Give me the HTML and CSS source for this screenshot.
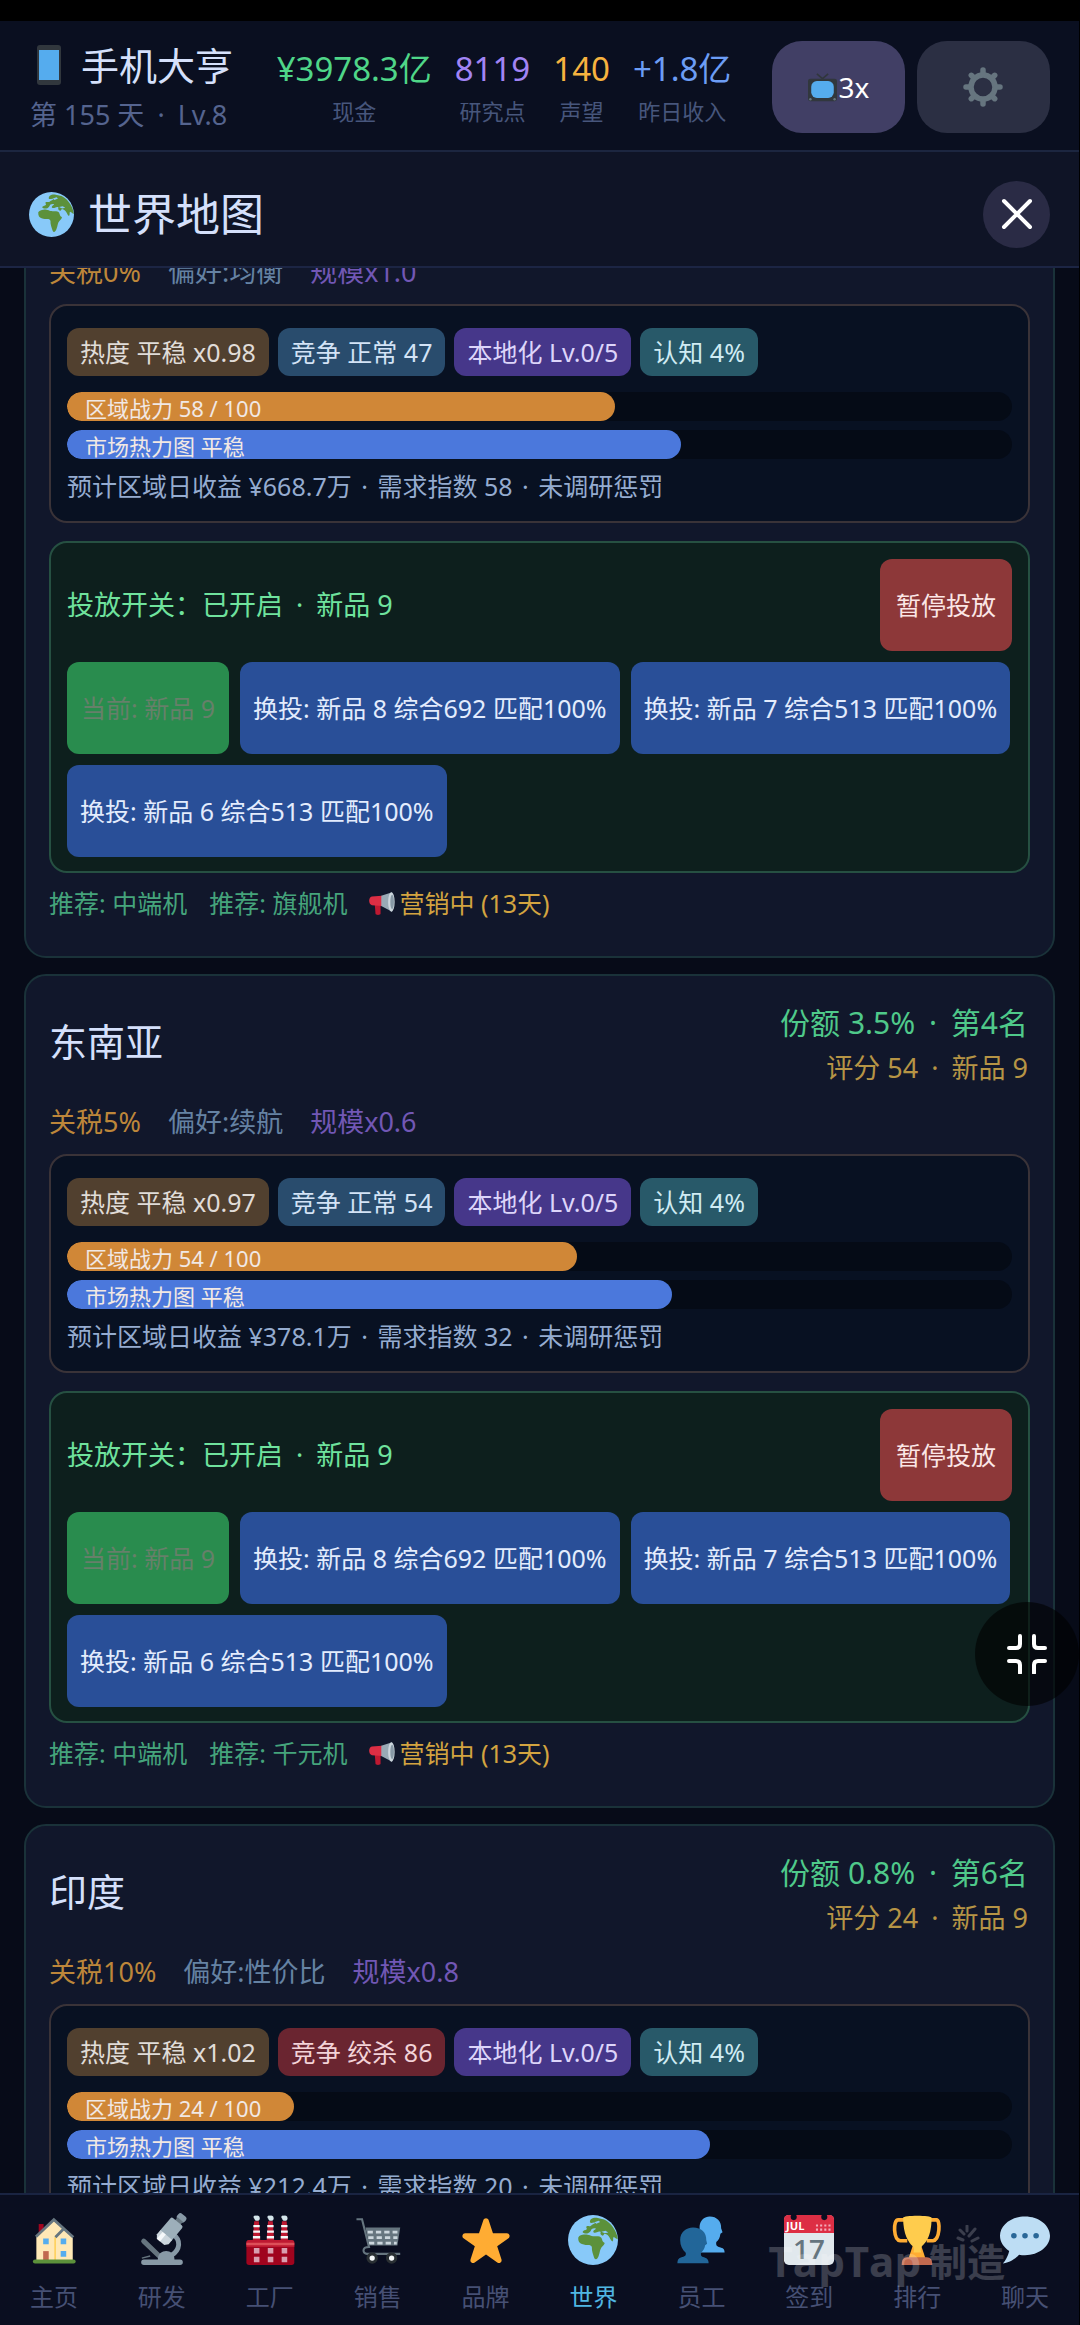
FILE: index.html
```html
<!DOCTYPE html>
<html lang="zh-CN">
<head>
<meta charset="utf-8">
<meta name="viewport" content="width=device-width, initial-scale=1">
<title>手机大亨 · 世界地图</title>
<link rel="stylesheet" href="styles.css">
</head>
<body>
<svg class="sprite" aria-hidden="true">
  <symbol id="i-globe" viewBox="0 0 36 36">
    <circle cx="18" cy="18" r="18" fill="#88c9f9"/>
    <path fill="#5c913b" d="M7.4 16.2c.8-1.5 2.600-2 4.200-2.100 1.700-.1 2.600.1 4.200.5 1.100.9 2.900.7 4.600.700 1.700 0 3.200.3 3.700 1.200.5.900.5 1.700 1 2.600.4.700 1.300.6 1.300 1.300-.4 1.500-2.200 2.500-2.900 4-.5 1.200-.7 2.900-1.200 4.200-.3 1.300-1 3.100-2.100 3.300-1.200.1-1.500-1.700-1.900-2.800-.5-1.200-.8-2.500-1-3.700-.2-1.300.2-2.300-.5-3.100-1.100-.9-2.600-.6-4.100-.7-1.700-.2-3.800-.8-4.700-2.100-.5-1-.7-2-.6-3.300z"/>
    <path fill="#5c913b" d="M16.500 3.100c1.400-1 3.500-1.300 4.900-.9l4.600 1c1.800.7 4 2.500 5.600 4.600 2 2.500 4 6.200 4.200 9.700-1.200-.3-1.800-1.500-3-1.700-.7 1.200.2 2.200-.8 3.300-.7-.4-1.400-1.600-2-2.800-.8-1.400-2-2.600-3.600-2.800-1 .5-.3 1.200-1.500 1.400-1.200-.4-2-1.500-1.300-2.600-1-.8-1.900-.1-2.800.2-1.200.5-2.700.3-2.600-.6.2-1.100 1.300-1.200 1.900-2-1-.6-2.200-.1-3.200.3-.5 1.200-1 2.100-2.200 2.700-1.500.7-3.600.4-4.200-.7.3-1.300 2.100-1 3-1.900.4-.8-.8-1.400-.2-2.100.9-.6 2.300.3 3.200-.5.800-.9 2.200-.9 3-1.900-.8-.9-2.600.4-3.600-.4-.4-.9.200-1.800.6-2.300z"/>
    <path fill="#88c9f9" d="M19 5.200l3-1 1.200.9-2.800 1.200zM24 12l3-.7 2 1.300-2.500.5z"/>
  </symbol>
  <symbol id="i-bullhorn" viewBox="0 0 36 36">
    <path fill="#be1931" d="M8 20h8v13c0 2-7 2-7 0z"/>
    <path fill="#dd2e44" d="M4 9l14-1v14L4 21c-5-1-5-11 0-12z"/>
    <path fill="#99aab5" d="M17 8L32 3v27L17 22z"/>
    <ellipse cx="31" cy="16.500" rx="4.500" ry="13.500" fill="#ccd6dd"/>
    <ellipse cx="32" cy="16.500" rx="2.500" ry="10" fill="#8899a6"/>
  </symbol>
</svg>

<div class="app">
  <header class="topbar">
    <div class="brand">
      <h1 class="brand-name">
        <svg class="phone" viewBox="0 0 24 40" aria-hidden="true"><rect width="24" height="40" rx="3" fill="#31373d"/><rect x="2" y="5" width="20" height="30" fill="#55acee"/></svg>
        手机大亨
      </h1>
      <p class="brand-sub">第 155 天 <span class="dot">·</span> Lv.8</p>
    </div>
    <dl class="stats">
      <div class="stat"><dd class="green">¥3978.3亿</dd><dt>现金</dt></div>
      <div class="stat"><dd class="violet">8119</dd><dt>研究点</dt></div>
      <div class="stat"><dd class="amber">140</dd><dt>声望</dt></div>
      <div class="stat"><dd class="blue">+1.8亿</dd><dt>昨日收入</dt></div>
    </dl>
    <div class="actions">
      <button class="action action-speed" type="button">
        <svg class="tv" viewBox="0 0 36 36" aria-hidden="true"><path d="M11 1l7 6 7-6" fill="none" stroke="#31373d" stroke-width="2"/><rect y="7" width="36" height="28" rx="3" fill="#31373d"/><rect x="4" y="10" width="28" height="21" rx="7" fill="#55acee"/><circle cx="3" cy="32.500" r="1.500" fill="#66757f"/><circle cx="33" cy="32.500" r="1.500" fill="#66757f"/></svg>3x
      </button>
      <button class="action" type="button" aria-label="设置">
        <svg class="gear" viewBox="0 0 40 40" aria-hidden="true"><g fill="none" stroke="#66757f" stroke-width="5.500"><circle cx="20" cy="20" r="12"/><path stroke-linecap="round" d="M20 7V3M20 33v4M7 20H3M33 20h4M10.800 10.800L8.300 8.300M29.200 10.800l2.500-2.500M10.800 29.200l-2.500 2.500M29.200 29.200l2.500 2.500"/></g></svg>
      </button>
    </div>
  </header>

  <div class="titlebar">
    <h2 class="title"><svg class="title-icon" aria-hidden="true"><use href="#i-globe"/></svg>世界地图</h2>
    <button class="close" type="button" aria-label="关闭">
      <svg viewBox="0 0 32 32" aria-hidden="true"><path d="M3 3l26 26M29 3L3 29" stroke="#fff" stroke-width="4" stroke-linecap="round"/></svg>
    </button>
  </div>

  <main class="regions" id="regions">
    <article class="card">
      <ul class="meta"><li class="tax">关税0%</li><li class="pref">偏好:均衡</li><li class="scale">规模x1.0</li></ul>
      <section class="market">
        <ul class="tags"><li class="tag heat">热度 平稳 x0.98</li><li class="tag rival">竞争 正常 47</li><li class="tag local">本地化 Lv.0/5</li><li class="tag aware">认知 4%</li></ul>
        <div class="bar"><div class="fill power" style="width:58%"></div><span class="bar-label">区域战力 58 / 100</span></div>
        <div class="bar"><div class="fill demand" style="width:65%"></div><span class="bar-label">市场热力图 平稳</span></div>
        <p class="forecast">预计区域日收益 ¥668.7万 <span class="dot">·</span> 需求指数 58 <span class="dot">·</span> 未调研惩罚</p>
      </section>
      <section class="launch">
        <div class="launch-head"><p>投放开关：已开启 <span class="dot">·</span> 新品 9</p><button class="btn stop" type="button">暂停投放</button></div>
        <div class="choices">
          <button class="btn current" type="button" disabled>当前: 新品 9</button>
          <button class="btn" type="button">换投: 新品 8 综合692 匹配100%</button>
          <button class="btn" type="button">换投: 新品 7 综合513 匹配100%</button>
          <button class="btn" type="button">换投: 新品 6 综合513 匹配100%</button>
        </div>
      </section>
      <ul class="hints"><li>推荐: 中端机</li><li>推荐: 旗舰机</li><li class="promo"><svg aria-hidden="true"><use href="#i-bullhorn"/></svg>营销中 (13天)</li></ul>
    </article>

    <article class="card">
      <div class="card-head">
        <h3>东南亚</h3>
        <div class="rank"><p class="share">份额 3.5% <span class="dot">·</span> 第4名</p><p class="score">评分 54 <span class="dot">·</span> 新品 9</p></div>
      </div>
      <ul class="meta"><li class="tax">关税5%</li><li class="pref">偏好:续航</li><li class="scale">规模x0.6</li></ul>
      <section class="market">
        <ul class="tags"><li class="tag heat">热度 平稳 x0.97</li><li class="tag rival">竞争 正常 54</li><li class="tag local">本地化 Lv.0/5</li><li class="tag aware">认知 4%</li></ul>
        <div class="bar"><div class="fill power" style="width:54%"></div><span class="bar-label">区域战力 54 / 100</span></div>
        <div class="bar"><div class="fill demand" style="width:64%"></div><span class="bar-label">市场热力图 平稳</span></div>
        <p class="forecast">预计区域日收益 ¥378.1万 <span class="dot">·</span> 需求指数 32 <span class="dot">·</span> 未调研惩罚</p>
      </section>
      <section class="launch">
        <div class="launch-head"><p>投放开关：已开启 <span class="dot">·</span> 新品 9</p><button class="btn stop" type="button">暂停投放</button></div>
        <div class="choices">
          <button class="btn current" type="button" disabled>当前: 新品 9</button>
          <button class="btn" type="button">换投: 新品 8 综合692 匹配100%</button>
          <button class="btn" type="button">换投: 新品 7 综合513 匹配100%</button>
          <button class="btn" type="button">换投: 新品 6 综合513 匹配100%</button>
        </div>
      </section>
      <ul class="hints"><li>推荐: 中端机</li><li>推荐: 千元机</li><li class="promo"><svg aria-hidden="true"><use href="#i-bullhorn"/></svg>营销中 (13天)</li></ul>
    </article>

    <article class="card">
      <div class="card-head">
        <h3>印度</h3>
        <div class="rank"><p class="share">份额 0.8% <span class="dot">·</span> 第6名</p><p class="score">评分 24 <span class="dot">·</span> 新品 9</p></div>
      </div>
      <ul class="meta"><li class="tax">关税10%</li><li class="pref">偏好:性价比</li><li class="scale">规模x0.8</li></ul>
      <section class="market">
        <ul class="tags"><li class="tag heat">热度 平稳 x1.02</li><li class="tag fierce">竞争 绞杀 86</li><li class="tag local">本地化 Lv.0/5</li><li class="tag aware">认知 4%</li></ul>
        <div class="bar"><div class="fill power" style="width:24%"></div><span class="bar-label">区域战力 24 / 100</span></div>
        <div class="bar"><div class="fill demand" style="width:68%"></div><span class="bar-label">市场热力图 平稳</span></div>
        <p class="forecast">预计区域日收益 ¥212.4万 <span class="dot">·</span> 需求指数 20 <span class="dot">·</span> 未调研惩罚</p>
      </section>
    </article>
  </main>

  <nav class="tabs">
    <a class="tab" href="#home"><svg viewBox="0 0 36 36" aria-hidden="true"><path fill="#a0041e" d="M7 6.500h3.500V13H7z"/><path fill="#ffe8b6" d="M5.300 15L17.800 4l13.700 12v17H5.300z"/><path fill="#ffcc4d" d="M18.300 16h1v17h-1z"/><path d="M5 15.600L17.900 3.400l14 12.600M19 16l5.500-5.500" fill="none" stroke="#66757f" stroke-width="2"/><path fill="#55acee" d="M10.200 17h4v4h-4zM22.800 17h4v4h-4zM22.800 26h4v4h-4z"/><path fill="#c1694f" d="M10.200 26h4v6.500h-4z"/><rect x="2.800" y="32" width="30.800" height="3" rx="1.500" fill="#5c913b"/></svg>主页</a>
    <a class="tab" href="#research"><svg viewBox="0 0 36 36" aria-hidden="true"><path d="M4.800 18.800l11 10.500" stroke="#66757f" stroke-width="3.600" stroke-linecap="round"/><path d="M26 14c6 4 5 11-1 15" fill="none" stroke="#8899a6" stroke-width="3.500"/><path fill="#8899a6" d="M15 32c0-8 12-8 12 0h4a2 2 0 010 4H5a2 2 0 010-4z"/><path d="M3.500 31l6-1.500" stroke="#66757f" stroke-width="1"/><g transform="rotate(40 21 13)"><rect x="19" y="-5" width="7" height="5" rx="2" fill="#8899a6"/><rect x="20" y="-1" width="5" height="4" fill="#66757f"/><rect x="16.500" y="1.500" width="11" height="14" rx="1.500" fill="#9dafba"/><path fill="#ccd6dd" d="M16.500 14h11v4l-2 2.500h-7l-2-2.500z"/><path fill="#f5f8fa" d="M18.500 14h3v6.500h-3z"/></g></svg>研发</a>
    <a class="tab" href="#factory"><svg viewBox="0 0 36 36" aria-hidden="true"><g id="stack"><path fill="#be1931" d="M6.600 4.500h3.400l1 14H5.600z"/><path stroke="#f5f8fa" stroke-width="1.700" d="M6 8h4.600M5.900 12h4.900M5.700 16h5.200"/><circle cx="8.700" cy="2.300" r="1.900" fill="#d5e5ea"/><circle cx="7.300" cy="1.500" r="1.200" fill="#d5e5ea"/></g><use href="#stack" x="10"/><use href="#stack" x="20"/><rect x="1" y="18" width="34.500" height="18" rx="2" fill="#a0041e"/><path fill="#be1931" d="M1 20a2 2 0 012-2h30.500a2 2 0 012 2v3H1z"/><path fill="#dd4f58" d="M1 20h34.500v1.800H1z"/><path fill="#d99eae" d="M6.400 23.800h4v4h-4zM16.400 23.800h4v4h-4zM26.400 23.800h4v4h-4zM6.400 30h4v4h-4zM16.400 30h4v4h-4zM26.400 30h4v4h-4z"/></svg>工厂</a>
    <a class="tab" href="#sales"><svg viewBox="0 0 36 36" aria-hidden="true"><path fill="#66757f" d="M9 9h25l-2 13H11.500z"/><path stroke="#ccd6dd" stroke-width="2" stroke-dasharray="3.800 2.200" d="M10.500 12.300H32M11 16.300h21M11.500 20.300h20"/><path d="M2.500 3h4l5 20C6 23 7 28 10 28h24" fill="none" stroke="#66757f" stroke-width="1.500"/><g fill="#f5f8fa" stroke="#292f33" stroke-width="2.200"><circle cx="13.800" cy="31" r="3"/><circle cx="27.800" cy="31" r="3"/></g></svg>销售</a>
    <a class="tab" href="#brand"><svg viewBox="0 0 36 36" aria-hidden="true"><path fill="#ffac33" d="M27.287 34.627c-.404 0-.806-.124-1.152-.371L18 28.422l-8.135 5.834c-.343.247-.747.371-1.148.371-.405 0-.81-.126-1.156-.38-.68-.498-.966-1.370-.71-2.173l3.095-9.577-8.127-5.802c-.682-.492-.973-1.360-.722-2.169.252-.803.990-1.356 1.832-1.371l10.019-.015 3.191-9.477c.27-.8 1.020-1.340 1.865-1.340.845 0 1.596.540 1.866 1.340l3.130 9.477 10.079.015c.844.015 1.583.568 1.833 1.371.25.809-.04 1.677-.722 2.169l-8.127 5.802 3.095 9.577c.257.803-.03 1.675-.71 2.173-.346.254-.752.380-1.157.380z"/></svg>品牌</a>
    <a class="tab active" href="#world" aria-current="page"><svg aria-hidden="true"><use href="#i-globe"/></svg>世界</a>
    <a class="tab" href="#staff"><svg viewBox="0 0 36 36" aria-hidden="true"><path fill="#55acee" d="M24.300 1c5 0 8.500 3.500 8.200 8.500l1 3-1.500 1c-.4 3-1.300 4.500-3 6-.5 3 1 3.500 3.500 4 1.800.4 2.500 1.500 2.500 3.500H17V8c.5-4.500 3.500-7 7.300-7z"/><path fill="#226699" d="M12.300 9c6 0 9.700 3.500 9.500 9.200l.6 2.500-1.400 1c-.3 2.500-1.500 4-3 5.500-.4 2.500.8 3 3 3.500 1.800.5 2.500 2 2.500 4H1c0-2.500.8-3.800 3-4.300 2-.5 3.500-.8 3-3.200C4.500 25 3 22 3 18c0-5.500 4-9 9.300-9z"/></svg>员工</a>
    <a class="tab" href="#checkin"><svg viewBox="0 0 36 36" aria-hidden="true"><rect width="36" height="36" rx="3.500" fill="#e1e8ed"/><path fill="#dd2e44" d="M0 13V3a3 3 0 013-3h30a3 3 0 013 3v10z"/><circle cx="7" cy="1.500" r="2.200" fill="#0a0e20"/><circle cx="29" cy="1.500" r="2.200" fill="#0a0e20"/><text class="cal-month" x="1.500" y="11">JUL</text><path stroke="#f4abba" stroke-width="1.500" stroke-dasharray="1.500 1.500" d="M23 7.500h11M23 10.500h11"/><text class="cal-day" x="18" y="31.500">17</text></svg>签到</a>
    <a class="tab" href="#ranking"><svg viewBox="0 0 36 36" aria-hidden="true"><path d="M9 3.500H4.500C.5 3.500 1 18 6 18.500h5M26.500 3.500H32c3 0 2.500 14.500-2.500 15H25" fill="none" stroke="#ffac33" stroke-width="2.600"/><path fill="#ffac33" d="M15 22h6l3 9H12z"/><path fill="#ffcc4d" d="M8 2c0-2 20.500-2 20.500 0 0 13-4 18-7 20.500-1 1-1 2.500-.5 4.500h-5.500c.5-2 .5-3.500-.5-4.500C12 20 8 14 8 2z"/><path fill="#c1694f" d="M7 36c0-3.500 1-5.500 4-5.500h14c3 0 4 2 4 5.500z"/></svg>排行</a>
    <a class="tab" href="#chat"><svg viewBox="0 0 36 36" aria-hidden="true"><path fill="#bdddf4" d="M18 1C8.059 1 0 7.268 0 15c0 4.368 2.574 8.268 6.604 10.835C6.080 28.144 4.859 31.569 2 35c5.758-.96 9.439-3.761 11.716-6.416 1.376.262 2.805.416 4.284.416 9.941 0 18-6.268 18-14S27.941 1 18 1z"/><g fill="#2a6797"><circle cx="10" cy="15" r="2"/><circle cx="18" cy="15" r="2"/><circle cx="26" cy="15" r="2"/></g></svg>聊天</a>
    <span class="watermark"><b>TapTap</b><b class="watermark-cn">制造</b><svg viewBox="0 0 26 20" aria-hidden="true"><path d="M12 1v5M5 5l4 4M20 4l-6 7M3 13l5 2M23 13l-6 3" stroke="#fff" stroke-width="3" stroke-linecap="round"/></svg></span>
  </nav>

  <button class="float" type="button" aria-label="退出全屏">
    <svg viewBox="0 0 40 40" aria-hidden="true"><path d="M13 2v8q0 4-4 4H2M27 2v8q0 4 4 4h7M2 27h7q4 0 4 4v8M38 27h-7q-4 0-4 4v8" fill="none" stroke="#fff" stroke-width="4" stroke-linecap="round"/></svg>
  </button>
</div>
<script src="app.js"></script>
</body>
</html>
```
FILE: styles.css
```css
* { box-sizing: border-box; }

body {
  margin: 0;
  background: #000;
  color: #d5e0fb;
  font-family: "Noto Sans", "Noto Sans CJK SC", sans-serif;
  font-size: 25px;
  line-height: 36px;
}

h1, h2, h3, p, ul, dl, dd { margin: 0; padding: 0; font-weight: 400; }
ul { list-style: none; }
button { border: 0; padding: 0; font: inherit; color: inherit; }
svg { display: block; flex: none; }
.sprite { position: absolute; width: 0; height: 0; }
.dot { margin: 0 6px; }

.app {
  position: relative;
  display: flex;
  flex-direction: column;
  height: 100vh;
  padding-top: 21px;
  border-right: 1px solid #000;
}

/* Top bar */
.topbar {
  display: flex;
  align-items: center;
  justify-content: space-between;
  height: 131px;
  padding: 3px 29px 0 30px;
  background: #0a0f20;
  border-bottom: 2px solid #1c2640;
}
.brand-name {
  display: flex;
  align-items: center;
  gap: 20px;
  padding-left: 7px;
  font-size: 38px;
  line-height: 56px;
}
.phone { width: 24px; height: 40px; }
.brand-sub { font-size: 27px; line-height: 44px; color: #55648f; }
.stats { display: flex; gap: 23px; padding: 4px 0 0 3px; }
.stat { display: flex; flex-direction: column; text-align: center; }
.stat dd { font-size: 33px; line-height: 44px; }
.stat dt { font-size: 22px; line-height: 40px; color: #47567c; }
.green { color: #4fd688; }
.violet { color: #a184f4; }
.amber { color: #f7b33f; }
.blue { color: #6c9df5; }
.actions { display: flex; gap: 12px; }
.action {
  display: flex;
  align-items: center;
  justify-content: center;
  gap: 2px;
  width: 133px;
  height: 92px;
  border-radius: 30px;
  background: #2b2f43;
  color: #fff;
  font-size: 28px;
}
.action-speed { background: #413f65; }
.tv { width: 29px; height: 29px; }
.gear { width: 40px; height: 40px; }

/* Panel title */
.titlebar {
  display: flex;
  align-items: center;
  justify-content: space-between;
  height: 116px;
  padding: 10px 29px 0;
  background: #0f1426;
  border-bottom: 2px solid #1c2544;
}
.title { display: flex; align-items: center; gap: 14px; font-size: 44px; line-height: 64px; }
.title-icon { width: 45px; height: 45px; }
.close {
  display: grid;
  place-items: center;
  width: 67px;
  height: 67px;
  border-radius: 50%;
  background: #2a2b45;
}
.close svg { width: 32px; height: 32px; }

/* Region list */
.regions {
  flex: 1;
  min-height: 0;
  overflow-y: auto;
  scrollbar-width: none;
  padding: 16px 24px;
  background: #070b18;
}
.card {
  margin-bottom: 16px;
  padding: 24px 23px 35px;
  border: 2px solid #1a3239;
  border-radius: 22px;
  background: #11172b;
}
.card-head {
  display: flex;
  align-items: center;
  justify-content: space-between;
  margin-bottom: 12px;
  line-height: 45px;
}
.card-head h3 { padding-bottom: 8px; font-size: 38px; }
.rank { padding-right: 2px; text-align: right; }
.share { font-size: 30px; color: #4fc98a; }
.score { font-size: 27px; color: #b69445; }
.meta { display: flex; gap: 27px; font-size: 27px; line-height: 40px; }
.tax { color: #bd863a; }
.pref { color: #6582a3; }
.scale { color: #7257b5; }

.market {
  margin-top: 12px;
  padding: 22px 16px 17px;
  border: 2px solid #3a3338;
  border-radius: 18px;
  background: #081122;
}
.tags { display: flex; flex-wrap: wrap; gap: 9px; margin-bottom: 16px; }
.tag { padding: 0 13px; border-radius: 12px; line-height: 48px; }
.heat { background: #51402f; color: #e0dcd8; }
.rival { background: #294c6d; color: #d3e3f6; }
.fierce { background: #6a2530; color: #f3d3d8; }
.local { background: #46378a; color: #ddd5fa; }
.aware { background: #285969; color: #cfebf3; }
.bar {
  position: relative;
  height: 29px;
  margin-bottom: 9px;
  overflow: hidden;
  border-radius: 15px;
  background: #050b16;
}
.fill { height: 100%; border-radius: 15px; }
.power { background: #d08737; }
.demand { background: #4b78dc; }
.bar-label {
  position: absolute;
  top: 0;
  left: 18px;
  font-size: 22px;
  line-height: 33px;
  color: #f1e8e4;
}
.forecast { color: #95acd0; }
.forecast .dot { margin: 0 3px; }

.launch {
  margin-top: 18px;
  padding: 16px 16px 14px;
  border: 2px solid #265042;
  border-radius: 18px;
  background: #0d1f1d;
}
.launch-head {
  display: flex;
  align-items: center;
  justify-content: space-between;
  margin-bottom: 11px;
  font-size: 27px;
  color: #6fe39d;
}
.choices { display: flex; flex-wrap: wrap; gap: 11px; }
.btn {
  height: 92px;
  padding: 0 13px;
  border-radius: 12px;
  background: #294f98;
  color: #e3ecfd;
  font-size: 25px;
}
.stop { padding: 0 16px; background: #8d3839; color: #fbe6e6; }
.current { padding: 0 14px; background: #298c4e; color: #66806a; }

.hints { display: flex; gap: 22px; margin-top: 12px; color: #45a47c; }
.promo { display: flex; align-items: center; gap: 4px; color: #d3a440; }
.promo svg { width: 26px; height: 26px; }

/* Bottom tabs */
.tabs {
  position: relative;
  display: flex;
  height: 132px;
  border-top: 2px solid #1a2442;
  background: #0a0e20;
}
.tab {
  flex: 1;
  display: flex;
  flex-direction: column;
  align-items: center;
  gap: 14px;
  padding-top: 20px;
  font-size: 24px;
  color: #465074;
  text-decoration: none;
}
.tab svg { width: 50px; height: 50px; overflow: visible; }
.tab.active { color: #50b6e2; }
.cal-month { font: 700 8px "Open Sans", sans-serif; fill: #fff; }
.cal-day { font: 600 20px "Open Sans", sans-serif; fill: #66757f; text-anchor: middle; }

.watermark {
  position: absolute;
  right: 74px;
  bottom: 38px;
  display: flex;
  align-items: center;
  gap: 8px;
  opacity: 0.2;
  color: #fff;
  font-family: "Open Sans", "Noto Sans CJK SC", sans-serif;
  font-size: 42px;
  line-height: 52px;
  pointer-events: none;
}
.watermark-cn { font-size: 38px; }
.watermark svg { position: absolute; top: -10px; right: 24px; width: 26px; height: 20px; }

.float {
  position: absolute;
  right: 0;
  bottom: 619px;
  display: grid;
  place-items: center;
  width: 104px;
  height: 104px;
  border-radius: 50%;
  background: rgba(0, 0, 0, 0.6);
}
.float svg { width: 40px; height: 40px; }
```
FILE: app.js
```js
document.getElementById("regions").scrollTop = 58;
```
